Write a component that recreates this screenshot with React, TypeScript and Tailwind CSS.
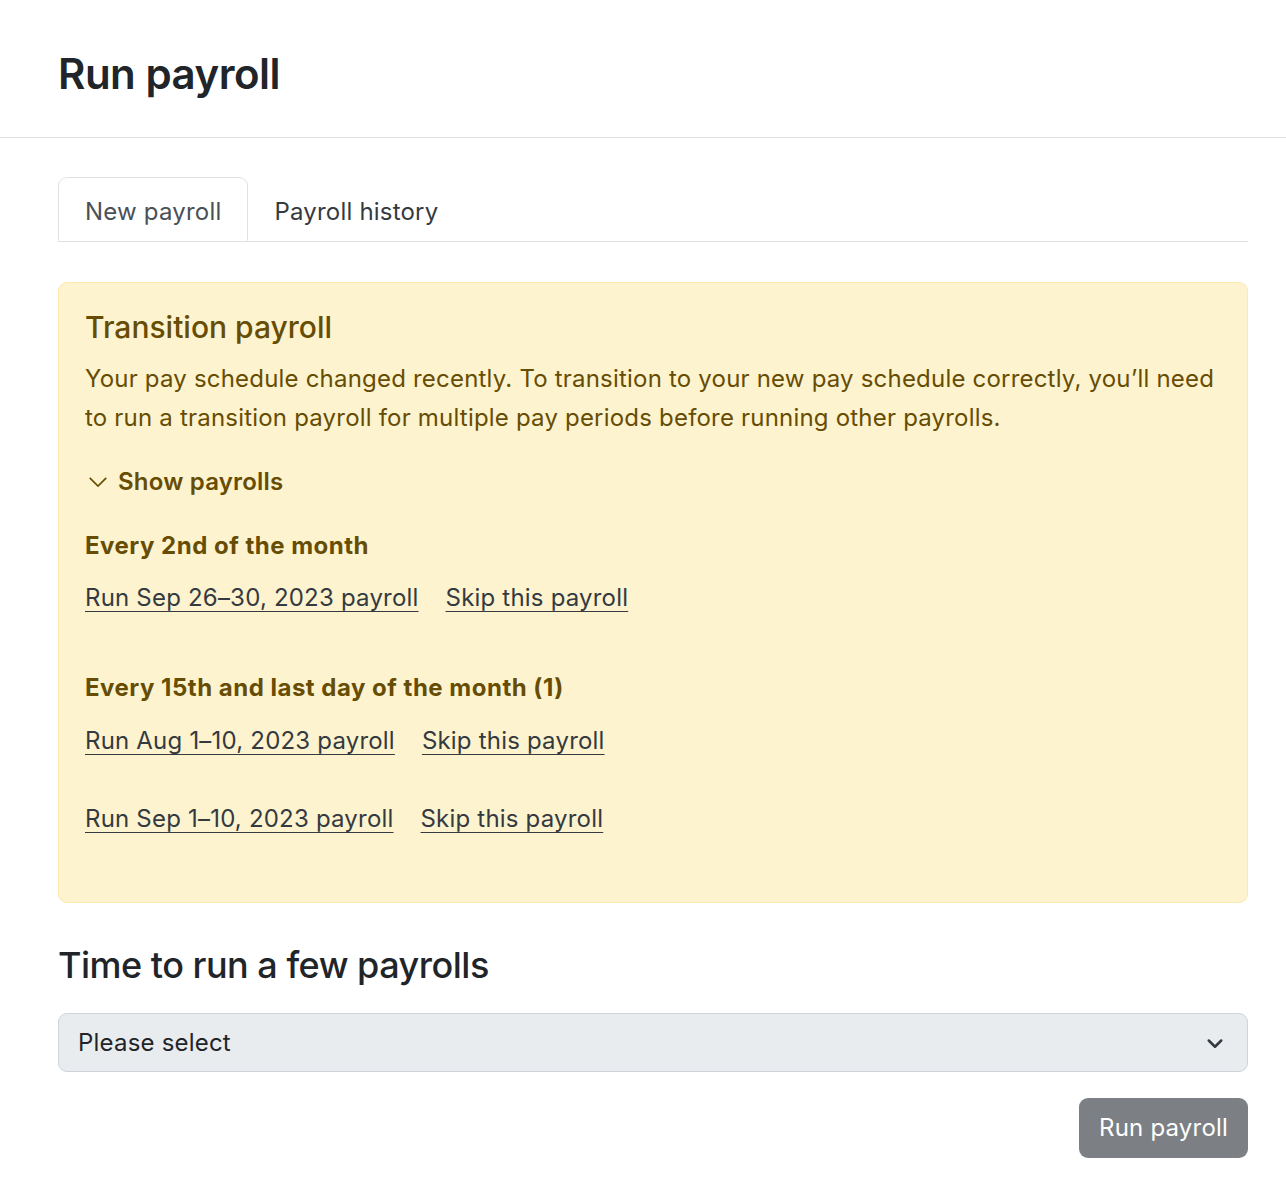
import React from 'react';

const linkCls = 'text-[#343a40] underline underline-offset-[5px] decoration-1';

function PayrollLinks({ label }: { label: string }) {
  return (
    <div className="flex gap-[27px] leading-[36px] mb-[42px]">
      <a href="#" className={linkCls}>{label}</a>
      <a href="#" className={linkCls}>Skip this payroll</a>
    </div>
  );
}

export default function App() {
  return (
    <div className="min-h-[1192px] bg-white text-[#212529] text-[24px] tracking-[0.2px] font-['Inter','Liberation_Sans',sans-serif]">
      <header className="border-b border-[#dee2e6] px-[58px] pt-[46px] pb-[35px]">
        <h1 className="text-[42px] leading-[56px] font-semibold tracking-[-0.5px]">Run payroll</h1>
      </header>

      <main className="pl-[58px] pr-[38px] pt-[39px]">
        <div className="flex border-b border-[#dee2e6]">
          <button className="px-[26px] h-[64px] pt-[6px] -mb-px bg-white border border-[#dee2e6] border-b-white rounded-t-[9px] text-[#495057]">
            New payroll
          </button>
          <button className="px-[26px] h-[64px] pt-[6px] text-[#343a40]">Payroll history</button>
        </div>

        <div className="mt-[40px] bg-[#fdf3cf] border border-[#fbe9b0] rounded-[9px] px-[26px] pt-[26px] pb-[23px] text-[#664d03]">
          <h2 className="text-[30px] leading-[36px] font-medium tracking-[0px] mb-[14px]">Transition payroll</h2>
          <p className="leading-[39px]">
            Your pay schedule changed recently. To transition to your new pay schedule correctly, you’ll need to run a
            transition payroll for multiple pay periods before running other payrolls.
          </p>

          <button className="flex items-center gap-[9px] mt-[27px] font-semibold leading-[36px]">
            <svg width="22" height="22" viewBox="0 0 16 16" fill="none" stroke="currentColor" strokeWidth="1.2" className="ml-[2px]">
              <path d="M2 5l6 6 6-6" />
            </svg>
            Show payrolls
          </button>

          <div className="mt-[28px]">
            <h3 className="font-bold tracking-[0.5px] leading-[36px] mb-[16px]">Every 2nd of the month</h3>
            <PayrollLinks label="Run Sep 26–30, 2023 payroll" />
          </div>

          <div className="mt-[54px]">
            <h3 className="font-bold tracking-[0.5px] leading-[36px] mb-[17px]">Every 15th and last day of the month (1)</h3>
            <PayrollLinks label="Run Aug 1–10, 2023 payroll" />
            <PayrollLinks label="Run Sep 1–10, 2023 payroll" />
          </div>
        </div>

        <h2 className="mt-[40px] text-[36px] leading-[44px] font-medium tracking-[-0.5px]">Time to run a few payrolls</h2>

        <div className="mt-[26px] h-[59px] flex items-center justify-between bg-[#e9ecef] border border-[#ced4da] rounded-[9px] pl-[19px] pr-[22px]">
          <span className="text-[#212529]">Please select</span>
          <svg width="20" height="20" viewBox="0 0 16 16" fill="none" stroke="#343a40" strokeWidth="2" strokeLinecap="round" strokeLinejoin="round">
            <path d="M3 6l5 5 5-5" />
          </svg>
        </div>

        <div className="flex justify-end mt-[26px]">
          <button disabled className="h-[60px] px-[20px] rounded-[9px] bg-[#7c8084] text-white">
            Run payroll
          </button>
        </div>
      </main>
    </div>
  );
}
